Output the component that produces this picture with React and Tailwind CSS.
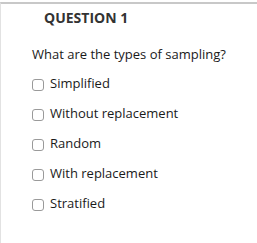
export default function App() {
  const options = ['Simplified', 'Without replacement', 'Random', 'With replacement', 'Stratified'];
  return (
    <div className="w-[257px] h-[243px] bg-white font-['Open_Sans',sans-serif] text-[#1a1a1a] pt-[2px]">
      <div className="h-full border-t-2 border-l border-[#e2e2e2] border-t-[#c8c8c8]">
        <div className="pl-[43px] pt-[2px] text-[14px] font-bold text-[#333333] leading-[24px]">QUESTION 1</div>
        <div className="pl-[31px] pt-[15px] text-[13px] leading-[18px]">What are the types of sampling?</div>
        <div className="pl-[31px] pt-[11px] flex flex-col gap-[12px]">
          {options.map((o) => (
            <label key={o} className="flex items-start gap-[6px] text-[13px] leading-[18px]">
              <span className="mt-[5px] w-[12px] h-[12px] rounded-[3px] border border-[#9a9a9a] bg-white shrink-0"></span>
              <span>{o}</span>
            </label>
          ))}
        </div>
      </div>
    </div>
  );
}
